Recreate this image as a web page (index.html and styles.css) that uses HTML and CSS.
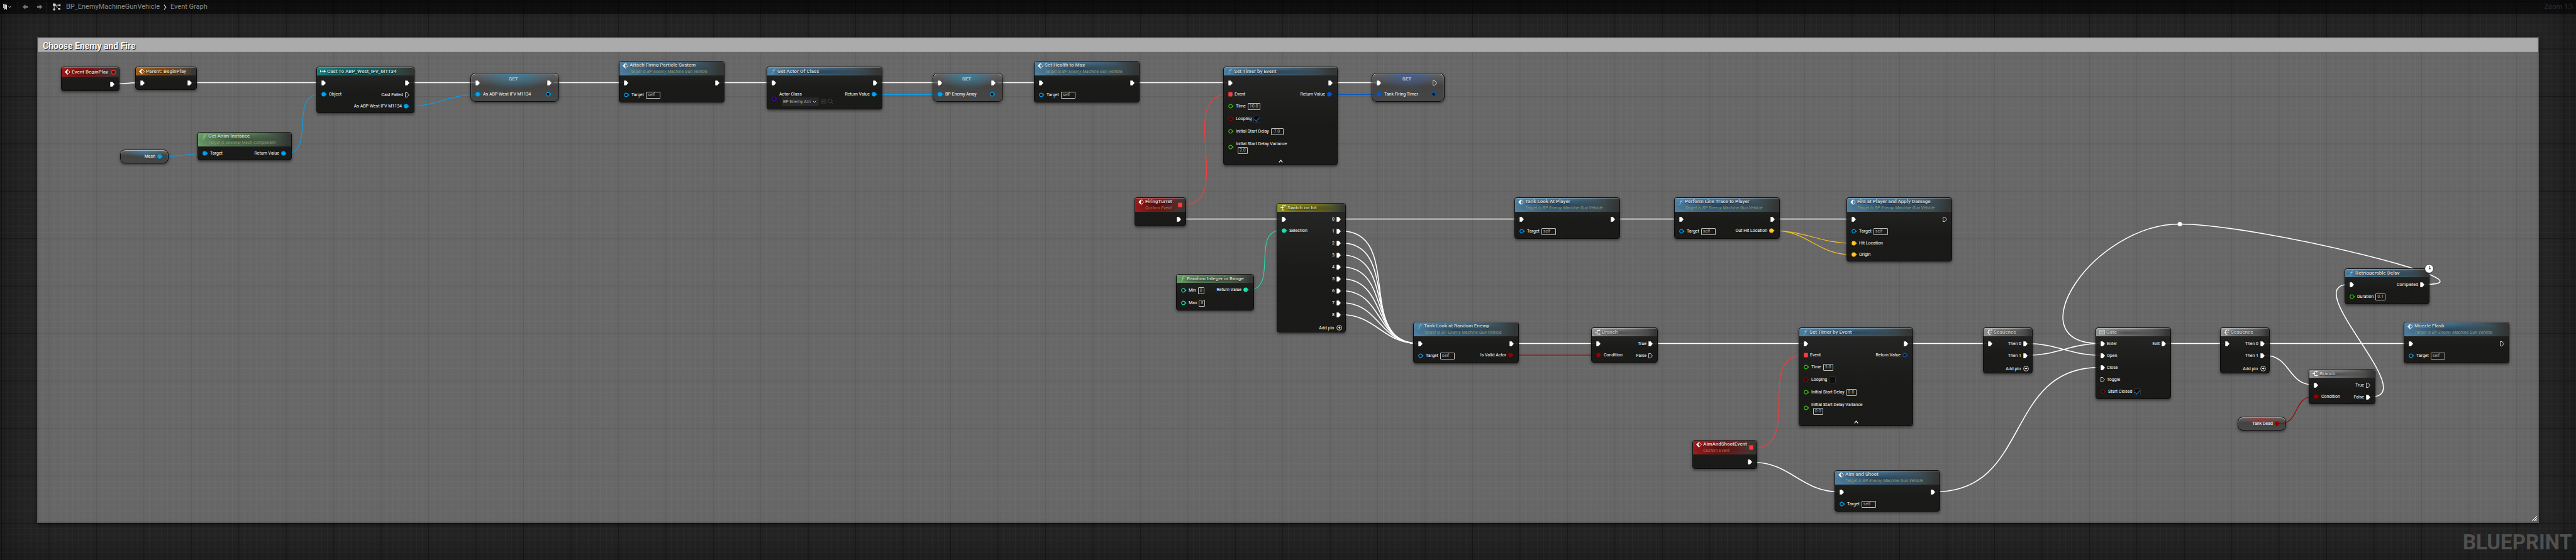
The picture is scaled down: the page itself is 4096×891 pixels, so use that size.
FILE: index.html
```html
<!DOCTYPE html>
<html lang="en">
<head>
<meta charset="utf-8">
<meta name="viewport" content="width=device-width, initial-scale=1">
<title>BP_EnemyMachineGunVehicle - Event Graph</title>
<link rel="stylesheet" href="styles.css">
</head>
<body>
<svg class="sprite" aria-hidden="true">
  <symbol id="exec" viewBox="0 0 7 8"><path d="M.6.4h3L6.6 4 3.6 7.6h-3z" fill="#fff" stroke="#fff" stroke-width=".6" stroke-linejoin="round"/></symbol>
  <symbol id="exec-open" viewBox="0 0 7 8"><path d="M.6.5h2.8L6.4 4 3.4 7.5H.6z" fill="none" stroke="#fff" stroke-width=".8" stroke-linejoin="round"/></symbol>
  <symbol id="dot" viewBox="0 0 9 8"><circle cx="3.6" cy="4" r="3.4" fill="currentColor"/><path d="M7 2.4 8.6 4 7 5.6z" fill="currentColor"/></symbol>
  <symbol id="ring" viewBox="0 0 9 8"><circle cx="3.6" cy="4" r="2.8" fill="#101110" stroke="currentColor" stroke-width="1.2"/><path d="M7 2.4 8.6 4 7 5.6z" fill="currentColor"/></symbol>
  <symbol id="square" viewBox="0 0 7 8"><rect x=".3" y=".6" width="6.4" height="6.8" rx="1" fill="currentColor"/></symbol>
  <symbol id="square-open" viewBox="0 0 7 8"><rect x=".9" y="1.2" width="5.2" height="5.6" rx=".8" fill="#2a0505" stroke="currentColor" stroke-width="1.2"/></symbol>
  <symbol id="event" viewBox="0 0 9 9"><path d="M4.5.4 8.5 4.5 4.5 8.6.5 4.5z" fill="none" stroke="#fff" stroke-width=".8"/><path d="M4.5.4v2.8L3.2 4.5l1.3 1.3v2.8L.5 4.5z" fill="#fff"/></symbol>
  <symbol id="func" viewBox="0 0 9 9"><path d="M7.4 1.2C6.4.5 5.4.9 5 2.6L3.9 7c-.3 1.3-1 1.7-1.9 1.2M3.4 3.5h3" fill="none" stroke="currentColor" stroke-width=".8" stroke-linecap="round"/></symbol>
  <symbol id="cast" viewBox="0 0 9 9"><path d="M0 2.4 2.4 4.5 0 6.6zM5.4 3.5h1V2.3L9 4.5 6.4 6.7V5.5h-1zM3 3.5h.7v2H3zM4.2 3.5h.7v2h-.7z" fill="#fff"/></symbol>
  <symbol id="switch" viewBox="0 0 9 9"><path d="M0 4.5h5.5M3 1.2v6.9M2.6 8.1h3.2M2.6 1.5H7" fill="none" stroke="#fff" stroke-width="1"/><path d="M6.6 0 9 1.5 6.6 3z" fill="#fff"/></symbol>
  <symbol id="sequence" viewBox="0 0 9 9"><path d="M0 4.5h3.4M3 .9v7.2M3 1.2h2.2M6.2 1.2h2.6M4.6 4.5h1M6.4 4.5h1.4M3 7.8h2M6 7.8h1" fill="none" stroke="#fff" stroke-width="1.2"/></symbol>
  <symbol id="branch" viewBox="0 0 9 9"><path d="M0 4.5h3.4M7 1.5H3.4v6H7" fill="none" stroke="#fff" stroke-width="1"/><path d="M6.4 0 8.8 1.5 6.4 3zM6.4 6 8.8 7.5 6.4 9z" fill="#fff"/></symbol>
  <symbol id="gate" viewBox="0 0 9 9"><path d="M.5 1.6h8v5.8h-8zM.5 3h2.4l3.2 3h2.4M.5 6H5M5 3h3.5" fill="none" stroke="#ddd" stroke-width=".7"/></symbol>
  <symbol id="plus" viewBox="0 0 9 9"><circle cx="4.5" cy="4.5" r="3.9" fill="none" stroke="#fff" stroke-width=".8"/><path d="M4.5 2.6v3.8M2.6 4.5h3.8" stroke="#fff" stroke-width="1"/></symbol>
</svg>

<div class="editor">
  <main class="graph" id="graph">
    <svg class="grid" aria-hidden="true">
      <defs>
        <pattern id="gridlines" x="2" y="2" width="75.45" height="75.45" patternUnits="userSpaceOnUse">
          <path class="minor" d="M9.43 0v76M18.86 0v76M28.29 0v76M37.72 0v76M47.16 0v76M56.59 0v76M66.02 0v76M0 9.43h76M0 18.86h76M0 28.29h76M0 37.72h76M0 47.16h76M0 56.59h76M0 66.02h76"/>
          <path class="major" d="M.4 0v76M0 .4h76"/>
        </pattern>
      </defs>
      <rect width="100%" height="100%" fill="url(#gridlines)"/>
    </svg>
    <div class="vignette"></div>
    <p class="watermark">BLUEPRINT</p>

    <section class="comment">
      <h1>Choose Enemy and Fire</h1>
      <svg class="grip" viewBox="0 0 8 8" aria-hidden="true"><path d="M0 8 8 0M3 8l5-5M5.5 8 8 5.5" stroke="#fff" stroke-width="1"/></svg>
    </section>

    <svg class="wires" aria-hidden="true">
      <g class="w-exec">
        <path d="M182 133.4C196 133.4 208 131.5 222 131.5"/>
        <path d="M305 131.5H510M652 131.5H756M880 131.5H991M1144 131.5H1227M1396 131.5H1492M1586 131.5H1651M1804 131.5H1953M2119 131.5H2190"/>
        <path d="M1878 348.5H2038M2132 348.5H2415M2568 348.5H2670M2822 348.5H2943"/>
        <path d="M2132 367.5C2232.7 367.5 2154.3 546.5 2255 546.5"/>
        <path d="M2132 386.5C2226.5 386.5 2160.5 546.5 2255 546.5"/>
        <path d="M2132 405.5C2220.2 405.5 2166.8 546.5 2255 546.5"/>
        <path d="M2132 424.5C2213.9 424.5 2173 546.5 2255 546.5"/>
        <path d="M2132 443.5C2207.6 443.5 2179.4 546.5 2255 546.5"/>
        <path d="M2132 462.5C2201.3 462.5 2185.7 546.5 2255 546.5"/>
        <path d="M2132 481.5C2195 481.5 2192 546.5 2255 546.5"/>
        <path d="M2132 500.5C2188.7 500.5 2198.3 546.5 2255 546.5"/>
        <path d="M2408 546.5H2538M2628 546.5H2867M3034 546.5H3160M3444 546.5H3537M3601 546.5H3830"/>
        <path d="M3224 546.5C3268.6 546.5 3294.4 565.5 3339 565.5"/>
        <path d="M3224 565.5C3268.6 565.5 3294.4 546.5 3339 546.5"/>
        <path d="M3601 565.5C3643 565.5 3637 612.5 3679 612.5"/>
        <path d="M3769.5 631.5C3851.5 631.5 3653 452.5 3735 452.5"/>
        <path d="M2786 735.5C2848 735.5 2863 782.5 2925 782.5"/>
        <path d="M3077 782.5C3230 782.5 3186 584.5 3339 584.5"/>
        <path d="M3855.5 452.5C3980.5 452.5 3591 356.5 3466 356.5"/>
        <path d="M3466 356.5C3329 356.5 3202 546.5 3339 546.5"/>
      </g>
      <circle cx="3466" cy="356.5" r="3.5" fill="#fff"/>
      <g class="w-data">
        <path class="object" d="M258 249.5C281 249.5 299 244.5 322 244.5M454 244.5C503 244.5 459 150.5 508 150.5M652 169C693 169 715 150.5 756 150.5M1394 150.5H1491"/>
        <path class="struct" d="M2118 150.5H2189"/>
        <path class="delegate" d="M1882 325.5C1964 325.5 1870 150.5 1952 150.5M2790 712.5C2865 712.5 2792 565 2867 565"/>
        <path class="int" d="M1985 461.5C2034 461.5 1988 366.5 2037 366.5"/>
        <path class="bool" d="M2407 565H2538M3625 674C3657 674 3646 631 3678 631"/>
        <path class="vector" d="M2821 367C2868 367 2896 387 2943 387M2821 367C2874 367 2890 405 2943 405"/>
      </g>
    </svg>

    <article class="node red" id="begin-play">
      <header class="tall"><svg class="i9"><use href="#event"/></svg><h2>Event BeginPlay</h2><svg class="i7 delegate pin-top"><use href="#square-open"/></svg></header>
      <div class="pins"><div class="out"><div class="row exec"><svg class="i7"><use href="#exec"/></svg></div></div></div>
    </article>

    <article class="node orange" id="parent-begin-play">
      <header><svg class="i9"><use href="#event"/></svg><h2>Parent: BeginPlay</h2></header>
      <div class="pins"><div class="in"><div class="row exec"><svg class="i7"><use href="#exec"/></svg></div></div><div class="out"><div class="row exec"><svg class="i7"><use href="#exec"/></svg></div></div></div>
    </article>

    <article class="node green" id="anim-instance">
      <header><svg class="i9 fn"><use href="#func"/></svg><h2>Get Anim Instance</h2><p>Target is Skeletal Mesh Component</p></header>
      <div class="pins"><div class="in"><div class="row"><svg class="i8 object"><use href="#dot"/></svg>Target</div></div><div class="out"><div class="row">Return Value<svg class="i8 object"><use href="#dot"/></svg></div></div></div>
    </article>

    <article class="var glow-sky" id="mesh"><div class="row">Mesh<svg class="i8 object"><use href="#dot"/></svg></div></article>

    <article class="node teal" id="cast-ifv">
      <header><svg class="i9"><use href="#cast"/></svg><h2>Cast To ABP_West_IFV_M1134</h2></header>
      <div class="pins"><div class="in"><div class="row exec"><svg class="i7"><use href="#exec"/></svg></div><div class="row"><svg class="i8 object"><use href="#dot"/></svg>Object</div></div>
      <div class="out"><div class="row exec"><svg class="i7"><use href="#exec"/></svg></div><div class="row exec">Cast Failed<svg class="i7"><use href="#exec-open"/></svg></div><div class="row">As ABP West IFV M1134<svg class="i8 object"><use href="#dot"/></svg></div></div></div>
    </article>

    <article class="setter glow-sky" id="set-ifv">
      <div class="row exec"><svg class="i7"><use href="#exec"/></svg><h2>SET</h2><svg class="i7"><use href="#exec"/></svg></div>
      <div class="row"><svg class="i8 object"><use href="#dot"/></svg><span>As ABP West IFV M1134</span><svg class="i8 object"><use href="#ring"/></svg></div>
    </article>

    <article class="node blue" id="attach-particle">
      <header><svg class="i9"><use href="#event"/></svg><h2>Attach Firing Particle System</h2><p>Target is BP Enemy Machine Gun Vehicle</p></header>
      <div class="pins"><div class="in"><div class="row exec"><svg class="i7"><use href="#exec"/></svg></div><label class="row field"><svg class="i8 object"><use href="#ring"/></svg>Target<input class="wide" value="self"></label></div><div class="out"><div class="row exec"><svg class="i7"><use href="#exec"/></svg></div></div></div>
    </article>

    <article class="node blue" id="actor-of-class">
      <header><svg class="i9 fn"><use href="#func"/></svg><h2>Get Actor Of Class</h2></header>
      <div class="pins"><div class="in"><div class="row exec"><svg class="i7"><use href="#exec"/></svg></div>
        <div class="row picker"><svg class="i8 class-ref"><use href="#ring"/></svg><div class="stack"><label for="actor-class">Actor Class</label><div class="picker-line"><div class="combo"><select id="actor-class"><option>BP Enemy Array</option></select><svg class="caret" viewBox="0 0 6 4" aria-hidden="true"><path d="M.6.6 3 3.2 5.4.6" fill="none" stroke="#ccc" stroke-width="1"/></svg></div>
          <button type="button" aria-label="Use selected asset"><svg class="i9" viewBox="0 0 9 9"><circle cx="4.5" cy="4.5" r="3.9" fill="none" stroke="#4b4b4b" stroke-width=".8"/><path d="M7 4.5H2.4M4.2 2.8 2.4 4.5l1.8 1.7" fill="none" stroke="#4b4b4b" stroke-width=".9"/></svg></button>
          <button type="button" aria-label="Browse to asset"><svg class="i9" viewBox="0 0 9 9"><circle cx="3.9" cy="3.8" r="3.2" fill="none" stroke="#4b4b4b" stroke-width=".8"/><path d="m6.2 6.2 2.3 2.5" stroke="#4b4b4b" stroke-width=".9"/></svg></button></div></div></div></div>
      <div class="out"><div class="row exec"><svg class="i7"><use href="#exec"/></svg></div><div class="row">Return Value<svg class="i8 object"><use href="#dot"/></svg></div></div></div>
    </article>

    <article class="setter glow-sky" id="set-array">
      <div class="row exec"><svg class="i7"><use href="#exec"/></svg><h2>SET</h2><svg class="i7"><use href="#exec"/></svg></div>
      <div class="row"><svg class="i8 object"><use href="#dot"/></svg><span>BP Enemy Array</span><svg class="i8 object"><use href="#ring"/></svg></div>
    </article>

    <article class="node blue" id="set-health">
      <header><svg class="i9"><use href="#event"/></svg><h2>Set Health to Max</h2><p>Target is BP Enemy Machine Gun Vehicle</p></header>
      <div class="pins"><div class="in"><div class="row exec"><svg class="i7"><use href="#exec"/></svg></div><label class="row field"><svg class="i8 object"><use href="#ring"/></svg>Target<input class="wide" value="self"></label></div><div class="out"><div class="row exec"><svg class="i7"><use href="#exec"/></svg></div></div></div>
    </article>

    <article class="node blue" id="timer-fire">
      <header><svg class="i9 fn"><use href="#func"/></svg><h2>Set Timer by Event</h2></header>
      <div class="pins"><div class="in"><div class="row exec"><svg class="i7"><use href="#exec"/></svg></div><div class="row"><svg class="i7 delegate"><use href="#square"/></svg>Event</div>
        <label class="row field"><svg class="i8 float"><use href="#ring"/></svg>Time<input class="mid" value="10.0"></label>
        <label class="row field"><svg class="i8 bool"><use href="#ring"/></svg>Looping<input type="checkbox" checked></label>
        <label class="row field"><svg class="i8 float"><use href="#ring"/></svg>Initial Start Delay<input class="mid" value="-7.0"></label>
        <label class="row double"><svg class="i8 float"><use href="#ring"/></svg><span class="stack">Initial Start Delay Variance<input class="small" value="2.0"></span></label></div>
      <div class="out"><div class="row exec"><svg class="i7"><use href="#exec"/></svg></div><div class="row">Return Value<svg class="i8 struct"><use href="#dot"/></svg></div></div></div>
      <button class="collapse" type="button" aria-label="Hide advanced pins"><svg viewBox="0 0 7 5"><path d="M.8 4.4 3.5 1l2.7 3.4" fill="none" stroke="#fff" stroke-width="1.2"/></svg></button>
    </article>

    <article class="setter glow-blue" id="set-timer">
      <div class="row exec"><svg class="i7"><use href="#exec"/></svg><h2>SET</h2><svg class="i7"><use href="#exec-open"/></svg></div>
      <div class="row"><svg class="i8 struct"><use href="#dot"/></svg><span>Tank Firing Timer</span><svg class="i8 struct"><use href="#ring"/></svg></div>
    </article>

    <article class="node red" id="firing-turret">
      <header><svg class="i9"><use href="#event"/></svg><h2>FiringTurret</h2><p>Custom Event</p><svg class="i7 delegate pin-top"><use href="#square"/></svg></header>
      <div class="pins"><div class="out"><div class="row exec"><svg class="i7"><use href="#exec"/></svg></div></div></div>
    </article>

    <article class="node yellow" id="switch-int">
      <header><svg class="i9"><use href="#switch"/></svg><h2>Switch on Int</h2></header>
      <div class="pins"><div class="in"><div class="row exec"><svg class="i7"><use href="#exec"/></svg></div><div class="row"><svg class="i8 int"><use href="#dot"/></svg>Selection</div></div>
      <div class="out">
        <div class="row exec">0<svg class="i7"><use href="#exec"/></svg></div>
        <div class="row exec">1<svg class="i7"><use href="#exec"/></svg></div>
        <div class="row exec">2<svg class="i7"><use href="#exec"/></svg></div>
        <div class="row exec">3<svg class="i7"><use href="#exec"/></svg></div>
        <div class="row exec">4<svg class="i7"><use href="#exec"/></svg></div>
        <div class="row exec">5<svg class="i7"><use href="#exec"/></svg></div>
        <div class="row exec">6<svg class="i7"><use href="#exec"/></svg></div>
        <div class="row exec">7<svg class="i7"><use href="#exec"/></svg></div>
        <div class="row exec">8<svg class="i7"><use href="#exec"/></svg></div></div></div>
      <button class="add-pin" type="button">Add pin<svg class="i9"><use href="#plus"/></svg></button>
    </article>

    <article class="node green" id="random-int">
      <header><svg class="i9 fn"><use href="#func"/></svg><h2>Random Integer in Range</h2></header>
      <div class="pins"><div class="in"><label class="row field"><svg class="i8 int"><use href="#ring"/></svg>Min<input class="tiny" value="0"></label><label class="row field"><svg class="i8 int"><use href="#ring"/></svg>Max<input class="tiny" value="8"></label></div><div class="out"><div class="row">Return Value<svg class="i8 int"><use href="#dot"/></svg></div></div></div>
    </article>

    <article class="node blue" id="look-player">
      <header><svg class="i9"><use href="#event"/></svg><h2>Tank Look At Player</h2><p>Target is BP Enemy Machine Gun Vehicle</p></header>
      <div class="pins"><div class="in"><div class="row exec"><svg class="i7"><use href="#exec"/></svg></div><label class="row field"><svg class="i8 object"><use href="#ring"/></svg>Target<input class="wide" value="self"></label></div><div class="out"><div class="row exec"><svg class="i7"><use href="#exec"/></svg></div></div></div>
    </article>

    <article class="node blue" id="line-trace">
      <header><svg class="i9 fn"><use href="#func"/></svg><h2>Perform Line Trace to Player</h2><p>Target is BP Enemy Machine Gun Vehicle</p></header>
      <div class="pins"><div class="in"><div class="row exec"><svg class="i7"><use href="#exec"/></svg></div><label class="row field"><svg class="i8 object"><use href="#ring"/></svg>Target<input class="wide" value="self"></label></div><div class="out"><div class="row exec"><svg class="i7"><use href="#exec"/></svg></div><div class="row">Out Hit Location<svg class="i8 vector"><use href="#dot"/></svg></div></div></div>
    </article>

    <article class="node blue" id="fire-player">
      <header><svg class="i9"><use href="#event"/></svg><h2>Fire at Player and Apply Damage</h2><p>Target is BP Enemy Machine Gun Vehicle</p></header>
      <div class="pins"><div class="in"><div class="row exec"><svg class="i7"><use href="#exec"/></svg></div><label class="row field"><svg class="i8 object"><use href="#ring"/></svg>Target<input class="wide" value="self"></label><div class="row"><svg class="i8 vector"><use href="#dot"/></svg>Hit Location</div><div class="row"><svg class="i8 vector"><use href="#dot"/></svg>Origin</div></div><div class="out"><div class="row exec"><svg class="i7"><use href="#exec-open"/></svg></div></div></div>
    </article>

    <article class="node blue" id="look-enemy">
      <header><svg class="i9 fn"><use href="#func"/></svg><h2>Tank Look at Random Enemy</h2><p>Target is BP Enemy Machine Gun Vehicle</p></header>
      <div class="pins"><div class="in"><div class="row exec"><svg class="i7"><use href="#exec"/></svg></div><label class="row field"><svg class="i8 object"><use href="#ring"/></svg>Target<input class="wide" value="self"></label></div><div class="out"><div class="row exec"><svg class="i7"><use href="#exec"/></svg></div><div class="row">Is Valid Actor<svg class="i8 bool"><use href="#dot"/></svg></div></div></div>
    </article>

    <article class="node gray" id="branch-valid">
      <header><svg class="i9"><use href="#branch"/></svg><h2>Branch</h2></header>
      <div class="pins"><div class="in"><div class="row exec"><svg class="i7"><use href="#exec"/></svg></div><div class="row"><svg class="i8 bool"><use href="#dot"/></svg>Condition</div></div><div class="out"><div class="row exec">True<svg class="i7"><use href="#exec"/></svg></div><div class="row exec">False<svg class="i7"><use href="#exec-open"/></svg></div></div></div>
    </article>

    <article class="node blue" id="timer-aim">
      <header><svg class="i9 fn"><use href="#func"/></svg><h2>Set Timer by Event</h2></header>
      <div class="pins"><div class="in"><div class="row exec"><svg class="i7"><use href="#exec"/></svg></div><div class="row"><svg class="i7 delegate"><use href="#square"/></svg>Event</div>
        <label class="row field"><svg class="i8 float"><use href="#ring"/></svg>Time<input class="small" value="3.0"></label>
        <label class="row field"><svg class="i8 bool"><use href="#ring"/></svg>Looping<input type="checkbox"></label>
        <label class="row field"><svg class="i8 float"><use href="#ring"/></svg>Initial Start Delay<input class="small" value="0.0"></label>
        <label class="row double"><svg class="i8 float"><use href="#ring"/></svg><span class="stack">Initial Start Delay Variance<input class="small" value="0.0"></span></label></div>
      <div class="out"><div class="row exec"><svg class="i7"><use href="#exec"/></svg></div><div class="row">Return Value<svg class="i8 struct"><use href="#ring"/></svg></div></div></div>
      <button class="collapse" type="button" aria-label="Hide advanced pins"><svg viewBox="0 0 7 5"><path d="M.8 4.4 3.5 1l2.7 3.4" fill="none" stroke="#fff" stroke-width="1.2"/></svg></button>
    </article>

    <article class="node red" id="aim-event">
      <header><svg class="i9"><use href="#event"/></svg><h2>AimAndShootEvent</h2><p>Custom Event</p><svg class="i7 delegate pin-top"><use href="#square"/></svg></header>
      <div class="pins"><div class="out"><div class="row exec"><svg class="i7"><use href="#exec"/></svg></div></div></div>
    </article>

    <article class="node blue" id="aim-shoot">
      <header><svg class="i9"><use href="#event"/></svg><h2>Aim and Shoot</h2><p>Target is BP Enemy Machine Gun Vehicle</p></header>
      <div class="pins"><div class="in"><div class="row exec"><svg class="i7"><use href="#exec"/></svg></div><label class="row field"><svg class="i8 object"><use href="#ring"/></svg>Target<input class="wide" value="self"></label></div><div class="out"><div class="row exec"><svg class="i7"><use href="#exec"/></svg></div></div></div>
    </article>

    <article class="node gray" id="sequence-a">
      <header><svg class="i9"><use href="#sequence"/></svg><h2>Sequence</h2></header>
      <div class="pins"><div class="in"><div class="row exec"><svg class="i7"><use href="#exec"/></svg></div></div><div class="out"><div class="row exec">Then 0<svg class="i7"><use href="#exec"/></svg></div><div class="row exec">Then 1<svg class="i7"><use href="#exec"/></svg></div></div></div>
      <button class="add-pin" type="button">Add pin<svg class="i9"><use href="#plus"/></svg></button>
    </article>

    <article class="node gray" id="gate-node">
      <header><svg class="i9"><use href="#gate"/></svg><h2>Gate</h2></header>
      <div class="pins"><div class="in"><div class="row exec"><svg class="i7"><use href="#exec"/></svg>Enter</div><div class="row exec"><svg class="i7"><use href="#exec"/></svg>Open</div><div class="row exec"><svg class="i7"><use href="#exec"/></svg>Close</div><div class="row exec"><svg class="i7"><use href="#exec-open"/></svg>Toggle</div>
        <label class="row field"><svg class="i8 bool"><use href="#ring"/></svg>Start Closed<input type="checkbox" checked></label></div>
      <div class="out"><div class="row exec">Exit<svg class="i7"><use href="#exec"/></svg></div></div></div>
    </article>

    <article class="node gray" id="sequence-b">
      <header><svg class="i9"><use href="#sequence"/></svg><h2>Sequence</h2></header>
      <div class="pins"><div class="in"><div class="row exec"><svg class="i7"><use href="#exec"/></svg></div></div><div class="out"><div class="row exec">Then 0<svg class="i7"><use href="#exec"/></svg></div><div class="row exec">Then 1<svg class="i7"><use href="#exec"/></svg></div></div></div>
      <button class="add-pin" type="button">Add pin<svg class="i9"><use href="#plus"/></svg></button>
    </article>

    <article class="var glow-red" id="tank-dead"><div class="row">Tank Dead<svg class="i8 bool"><use href="#dot"/></svg></div></article>

    <article class="node gray" id="branch-dead">
      <header><svg class="i9"><use href="#branch"/></svg><h2>Branch</h2></header>
      <div class="pins"><div class="in"><div class="row exec"><svg class="i7"><use href="#exec"/></svg></div><div class="row"><svg class="i8 bool"><use href="#dot"/></svg>Condition</div></div><div class="out"><div class="row exec">True<svg class="i7"><use href="#exec-open"/></svg></div><div class="row exec">False<svg class="i7"><use href="#exec"/></svg></div></div></div>
    </article>

    <article class="node blue" id="retrigger-delay">
      <header><svg class="i9 fn"><use href="#func"/></svg><h2>Retriggerable Delay</h2></header>
      <div class="pins"><div class="in"><div class="row exec"><svg class="i7"><use href="#exec"/></svg></div><label class="row field"><svg class="i8 float"><use href="#ring"/></svg>Duration<input class="small" value="0.1"></label></div><div class="out"><div class="row exec">Completed<svg class="i7"><use href="#exec"/></svg></div></div></div>
      <svg class="clock" viewBox="0 0 15 15" aria-hidden="true"><circle cx="7.5" cy="7.5" r="6.9" fill="#fff" stroke="#111" stroke-width=".8"/><path d="M7.5 3v4.8H10" fill="none" stroke="#111" stroke-width="1"/></svg>
    </article>

    <article class="node blue" id="muzzle-flash">
      <header><svg class="i9"><use href="#event"/></svg><h2>Muzzle Flash</h2><p>Target is BP Enemy Machine Gun Vehicle</p></header>
      <div class="pins"><div class="in"><div class="row exec"><svg class="i7"><use href="#exec"/></svg></div><label class="row field"><svg class="i8 object"><use href="#ring"/></svg>Target<input class="wide" value="self"></label></div><div class="out"><div class="row exec"><svg class="i7"><use href="#exec-open"/></svg></div></div></div>
    </article>
  </main>

  <div class="toolbar">
    <button class="bookmarks" type="button" aria-label="Bookmarks"><svg width="14" height="12" viewBox="0 0 14 12"><path d="M1 1h4v1H2v6H1z" fill="#bbb"/><path d="M2.6 2.4H7V11L4.8 8.8 2.6 11z" fill="#ccc"/><path d="m9.6 5 1.8 2.2L13.2 5" fill="none" stroke="#bbb" stroke-width="1"/></svg></button>
    <div class="history">
      <button type="button" aria-label="Back"><svg width="12" height="10" viewBox="0 0 12 10"><path d="M2 5 6.4 1v2.600h4v2.800h-4V9z" fill="#7a7a7a"/></svg></button>
      <button type="button" aria-label="Forward"><svg width="12" height="10" viewBox="0 0 12 10"><path d="M10.400 5 6 1v2.600H2v2.800h4V9z" fill="#7a7a7a"/></svg></button>
    </div>
    <nav aria-label="Breadcrumb">
      <svg width="14" height="12" viewBox="0 0 14 12" aria-hidden="true"><rect x="1" y=".6" width="4.6" height="4" rx=".8" fill="#ccc"/><rect x="10" y="2" width="3.4" height="2.8" rx=".8" fill="#ccc"/><rect x="1.4" y="8.6" width="3.6" height="3" rx=".8" fill="#ccc"/><rect x="9.6" y="8" width="3.4" height="2.8" rx=".8" fill="#ccc"/><path d="M3.2 4v5M5 3.200h5.500M5 4l5 5" fill="none" stroke="#ccc" stroke-width=".9"/></svg>
      <a href="#graph">BP_EnemyMachineGunVehicle</a>
      <svg width="5" height="9" viewBox="0 0 5 9" aria-hidden="true"><path d="m.8.6 3 3.900-3 3.900" fill="none" stroke="#ddd" stroke-width="1.2"/></svg>
      <a href="#graph">Event Graph</a>
    </nav>
    <span class="zoom">Zoom 1:1</span>
  </div>
</div>
</body>
</html>
```
FILE: styles.css
```css
* { box-sizing: border-box; }

body {
  margin: 0;
  background: #262626;
  color: #fff;
  font: 7px/10px Roboto, "Liberation Sans", sans-serif;
}

h1, h2, p { margin: 0; }
button { margin: 0; padding: 0; border: 0; background: none; color: inherit; font: inherit; display: flex; align-items: center; }
a { color: inherit; text-decoration: none; }
svg { flex: none; display: block; }
.sprite { position: absolute; width: 0; height: 0; }

/* The graph and its toolbar share one cell, the toolbar on top. */
.editor { display: grid; min-height: 100vh; overflow: hidden; }
.editor > * { grid-area: 1 / 1; }

/* Toolbar */
.toolbar {
  position: relative;
  align-self: start;
  display: flex;
  align-items: center;
  height: 22px;
  background: rgba(0, 0, 0, .55);
  color: #8a8a8a;
  font-size: 11px;
  line-height: 14px;
}
.bookmarks { padding: 0 10px 0 4px; height: 20px; border-right: 1px solid #222; }
.history { display: flex; gap: 11px; height: 20px; padding: 0 5px; border-right: 1px solid #222; }
.toolbar nav { display: flex; align-items: center; gap: 6px; padding-left: 8px; }
.toolbar nav a:first-of-type { padding-left: 2px; }
.zoom { margin-left: auto; padding-right: 4px; color: #2f2f2f; }

/* Canvas */
.graph { position: relative; }
.grid, .wires, .vignette { position: absolute; inset: 0; width: 100%; height: 100%; }
.minor { stroke: #323232; stroke-width: .7; }
.major { stroke: #141414; stroke-width: .8; }
.vignette { box-shadow: inset 0 0 80px rgba(0, 0, 0, .5); }
.watermark {
  position: absolute;
  right: 6px;
  bottom: 9px;
  color: #505050;
  font-size: 33px;
  line-height: 38px;
  font-weight: 700;
}

.comment {
  position: absolute;
  inset: 59px;
  border: 2px solid rgba(60, 60, 60, .35);
  background: rgba(255, 255, 255, .3);
  box-shadow: 0 3px 8px rgba(0, 0, 0, .5);
}
.comment h1 {
  height: 22px;
  padding: 1px 6px;
  border: 1px solid #bdbdbd;
  border-bottom-color: #979797;
  background: #ababab;
  color: #f6f6f6;
  font-size: 14px;
  line-height: 21px;
  font-weight: 700;
  text-shadow: 1px 1px 0 #222;
}
.grip { position: absolute; right: 1px; bottom: 1px; width: 8px; height: 8px; }

.w-exec { fill: none; stroke: #fff; stroke-width: 1.6; }
.w-data { fill: none; stroke-width: 1.2; }
.w-data path { stroke: currentColor; opacity: .95; }

.object { color: #00a2f2; }
.struct { color: #0057c9; }
.delegate { color: #ff3a3a; }
.float { color: #36c30c; }
.bool { color: #930000; }
.int { color: #20dfae; }
.vector { color: #fdc526; }
.class-ref { color: #5800bd; }

/* Nodes */
.node, .setter, .var { position: absolute; border: 1px solid #0c0c0c; box-shadow: 0 2px 4px rgba(0, 0, 0, .5); }
.node {
  border-radius: 4px;
  background: linear-gradient(rgba(30, 31, 30, .9), rgba(19, 20, 17, .92) 60%);
}
.node header {
  display: grid;
  grid-template-columns: 9px 1fr auto;
  column-gap: 2px;
  align-items: center;
  padding: 1px 5px;
  min-height: 13px;
  border-radius: 3px 3px 0 0;
  box-shadow: inset 0 1px 0 rgba(255, 255, 255, .28);
  background:
    radial-gradient(ellipse 45% 70% at 42% 60%, rgba(0, 0, 0, .5), transparent),
    linear-gradient(100deg, var(--tint) 0, var(--tint) 45%, #333634 96%);
}
.node header.tall { min-height: 15px; }
.node h2 {
  color: #cdcdcd;
  font-size: 8px;
  line-height: 10px;
  font-weight: 700;
  white-space: nowrap;
  text-shadow: 0 1px 1px rgba(0, 0, 0, .5);
}
.node header p {
  grid-column: 2;
  color: var(--sub, #8c9b78);
  font-style: italic;
  white-space: nowrap;
}
.pin-top { grid-column: 3; grid-row: 1 / span 2; }
.tall .pin-top { grid-row: 1; }

.blue { --tint: #4f80a2; }
.green { --tint: #6a9a68; }
.red { --tint: #9e1c1c; --sub: #a87a55; }
.orange { --tint: #a5601c; }
.teal { --tint: #15827f; }
.yellow { --tint: #94941a; }
.gray { --tint: #969696; }
.gray h2 { color: #bdbdbd; }
.fn { color: #7cc4f5; }
.green .fn { color: #a4f09a; }

.i7 { width: 7px; height: 8px; }
.i8 { width: 9px; height: 8px; }
.i9 { width: 9px; height: 9px; }

.pins { display: flex; justify-content: space-between; padding: 2px 7px 1px; }
.out { margin-left: auto; }
.row { display: flex; align-items: center; gap: 3px; height: 18px; white-space: nowrap; }
.out .row { justify-content: flex-end; }
.row.exec { height: 19px; }
.row.field { height: 20px; }
.row.double { height: 30px; }
.row.picker { height: 31px; }
.stack { display: flex; flex-direction: column; align-items: flex-start; }
.stack input { margin-left: 3px; }

input {
  height: 11px;
  margin: 0;
  padding: 0 2px;
  border: 1px solid #bdbdbd;
  border-radius: 1px;
  background: transparent;
  color: #b0b0b0;
  font: inherit;
}
.tiny { width: 10px; }
.small { width: 16px; }
.mid { width: 20px; }
.wide { width: 23px; }
input[type="checkbox"] {
  appearance: none;
  display: grid;
  place-items: center;
  width: 11px;
  padding: 0;
  border-color: #333;
  border-radius: 2px;
  background: #0e0e0e;
}
input[type="checkbox"]:checked::before {
  content: "";
  width: 4px;
  height: 7px;
  border: solid #1488ff;
  border-width: 0 1px 1px 0;
  transform: rotate(40deg);
}

.picker-line { display: flex; align-items: center; gap: 2px; padding-left: 4px; }
.combo { position: relative; display: flex; width: 59px; height: 14px; margin-right: 1px; }
.combo select {
  appearance: none;
  width: 100%;
  padding: 0 13px 0 2px;
  border: 0;
  border-radius: 2px;
  background: #272827;
  color: #b0b0b0;
  font: inherit;
}
.caret { position: absolute; right: 4px; top: 5px; width: 6px; height: 4px; }

.collapse { width: 100%; height: 12px; justify-content: center; }
.collapse svg { width: 7px; height: 5px; }
.add-pin { gap: 4px; height: 13px; margin: 4px 5px 0 auto; }
.clock { position: absolute; right: -8px; top: -8px; width: 15px; height: 15px; }

/* Variable set and get nodes */
.setter, .var {
  border-radius: 8px;
  background:
    radial-gradient(ellipse 42% 50% at 50% 8%, var(--glow), transparent),
    linear-gradient(rgba(100, 100, 100, .75), rgba(52, 52, 52, .72) 45%, rgba(62, 62, 62, .8));
  box-shadow: inset 0 1px 1px rgba(255, 255, 255, .55), 0 2px 4px rgba(0, 0, 0, .5);
}
.setter { padding: 5px 11px 2px 7px; }
.setter .row { justify-content: space-between; }
.setter .row > span { margin-right: auto; }
.setter h2 { align-self: flex-start; color: #c4c4c4; font-size: 8px; line-height: 8px; font-weight: 700; }
.var { display: flex; justify-content: flex-end; align-items: center; height: 22px; padding: 0 8px; }
.glow-sky { --glow: rgba(50, 135, 175, .75); }
.glow-blue { --glow: rgba(55, 95, 165, .7); }
.glow-red { --glow: rgba(175, 45, 45, .7); }

/* Node places on the canvas */
#begin-play { left: 97px; top: 106px; width: 93px; }
#parent-begin-play { left: 215px; top: 106px; width: 98px; }
#anim-instance { left: 314px; top: 210px; width: 150px; }
#mesh { left: 191px; top: 238px; width: 77px; }
#cast-ifv { left: 503px; top: 106px; width: 156px; }
#set-ifv { left: 748px; top: 116px; width: 141px; }
#attach-particle { left: 984px; top: 97px; width: 168px; }
#actor-of-class { left: 1219px; top: 106px; width: 184px; }
#set-array { left: 1483px; top: 116px; width: 112px; }
#set-health { left: 1644px; top: 97px; width: 168px; }
#timer-fire { left: 1945px; top: 106px; width: 182px; }
#set-timer { left: 2181px; top: 116px; width: 116px; }
#firing-turret { left: 1804px; top: 314px; width: 82px; }
#switch-int { left: 2030px; top: 323px; width: 110px; }
#random-int { left: 1870px; top: 436px; width: 124px; }
#look-player { left: 2408px; top: 314px; width: 168px; }
#line-trace { left: 2662px; top: 314px; width: 168px; }
#fire-player { left: 2936px; top: 314px; width: 168px; }
#look-enemy { left: 2247px; top: 512px; width: 168px; }
#branch-valid { left: 2530px; top: 521px; width: 106px; }
#timer-aim { left: 2860px; top: 521px; width: 182px; }
#aim-event { left: 2691px; top: 700px; width: 103px; }
#aim-shoot { left: 2917px; top: 748px; width: 168px; }
#sequence-a { left: 3153px; top: 521px; width: 79px; }
#gate-node { left: 3332px; top: 521px; width: 120px; }
#sequence-b { left: 3530px; top: 521px; width: 79px; }
#tank-dead { left: 3558px; top: 663px; width: 77px; }
#branch-dead { left: 3671px; top: 587px; width: 106px; }
#retrigger-delay { left: 3728px; top: 427px; width: 135px; }
#muzzle-flash { left: 3822px; top: 512px; width: 168px; }
```
